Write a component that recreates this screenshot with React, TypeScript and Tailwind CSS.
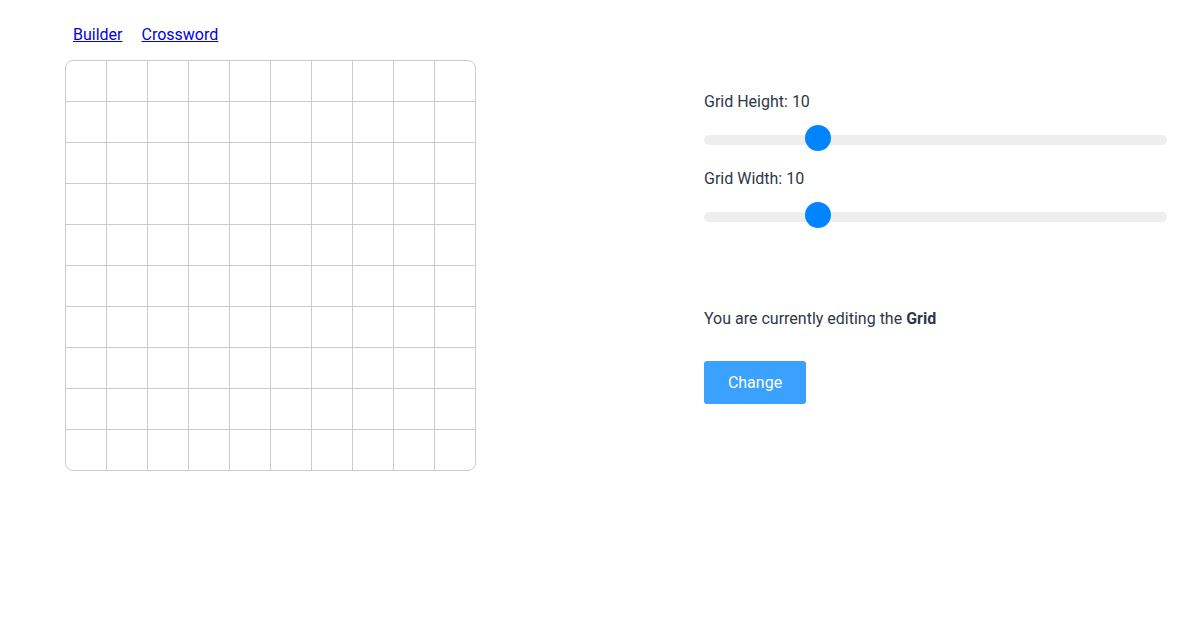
import { useState } from 'react'

const ROWS = 10
const COLS = 10

function Slider({ label, value, pct }: { label: string; value: number; pct: number }) {
  return (
    <div className="flex flex-col">
      <span className="h-6 leading-6">{label}: {value}</span>
      <div className="relative mt-[21px] h-[10px] w-[463px] rounded-full bg-[#eeeeee]">
        {/* thumb */}
        <div
          className="absolute top-[-10px] h-[26px] w-[26px] -translate-x-1/2 rounded-full bg-[#0084ff]"
          style={{ left: `${pct}%` }}
        />
      </div>
    </div>
  )
}

export default function App() {
  const [mode] = useState('Grid')

  return (
    <div className="flex h-[630px] w-[1200px] bg-white font-['Roboto',sans-serif] text-base text-[#2d3748]">
      <div className="flex flex-col pl-[65px] pt-[23px]">
        <nav className="flex gap-[19px] pl-2 leading-6">
          <a href="#" className="text-[#0000ee] underline">Builder</a>
          <a href="#" className="text-[#0000ee] underline">Crossword</a>
        </nav>
        <div className="mt-[13px] grid w-[411px] grid-cols-[repeat(10,40px)] gap-px overflow-hidden rounded-lg border border-[#cccccc] bg-[#cccccc]">
          {Array.from({ length: ROWS * COLS }).map((_, i) => (
            <div key={i} className="h-10 bg-white" />
          ))}
        </div>
      </div>

      <div className="ml-[228px] flex flex-col pt-[90px]">
        <Slider label="Grid Height" value={10} pct={24.6} />
        <div className="mt-[22px]">
          <Slider label="Grid Width" value={10} pct={24.6} />
        </div>
        <p className="mt-[85px] h-6 leading-6">
          You are currently editing the <b>{mode}</b>
        </p>
        <button className="mt-[30px] h-[43px] w-[102px] rounded-[3px] bg-[#3ba1ff] text-white">
          Change
        </button>
      </div>
    </div>
  )
}
